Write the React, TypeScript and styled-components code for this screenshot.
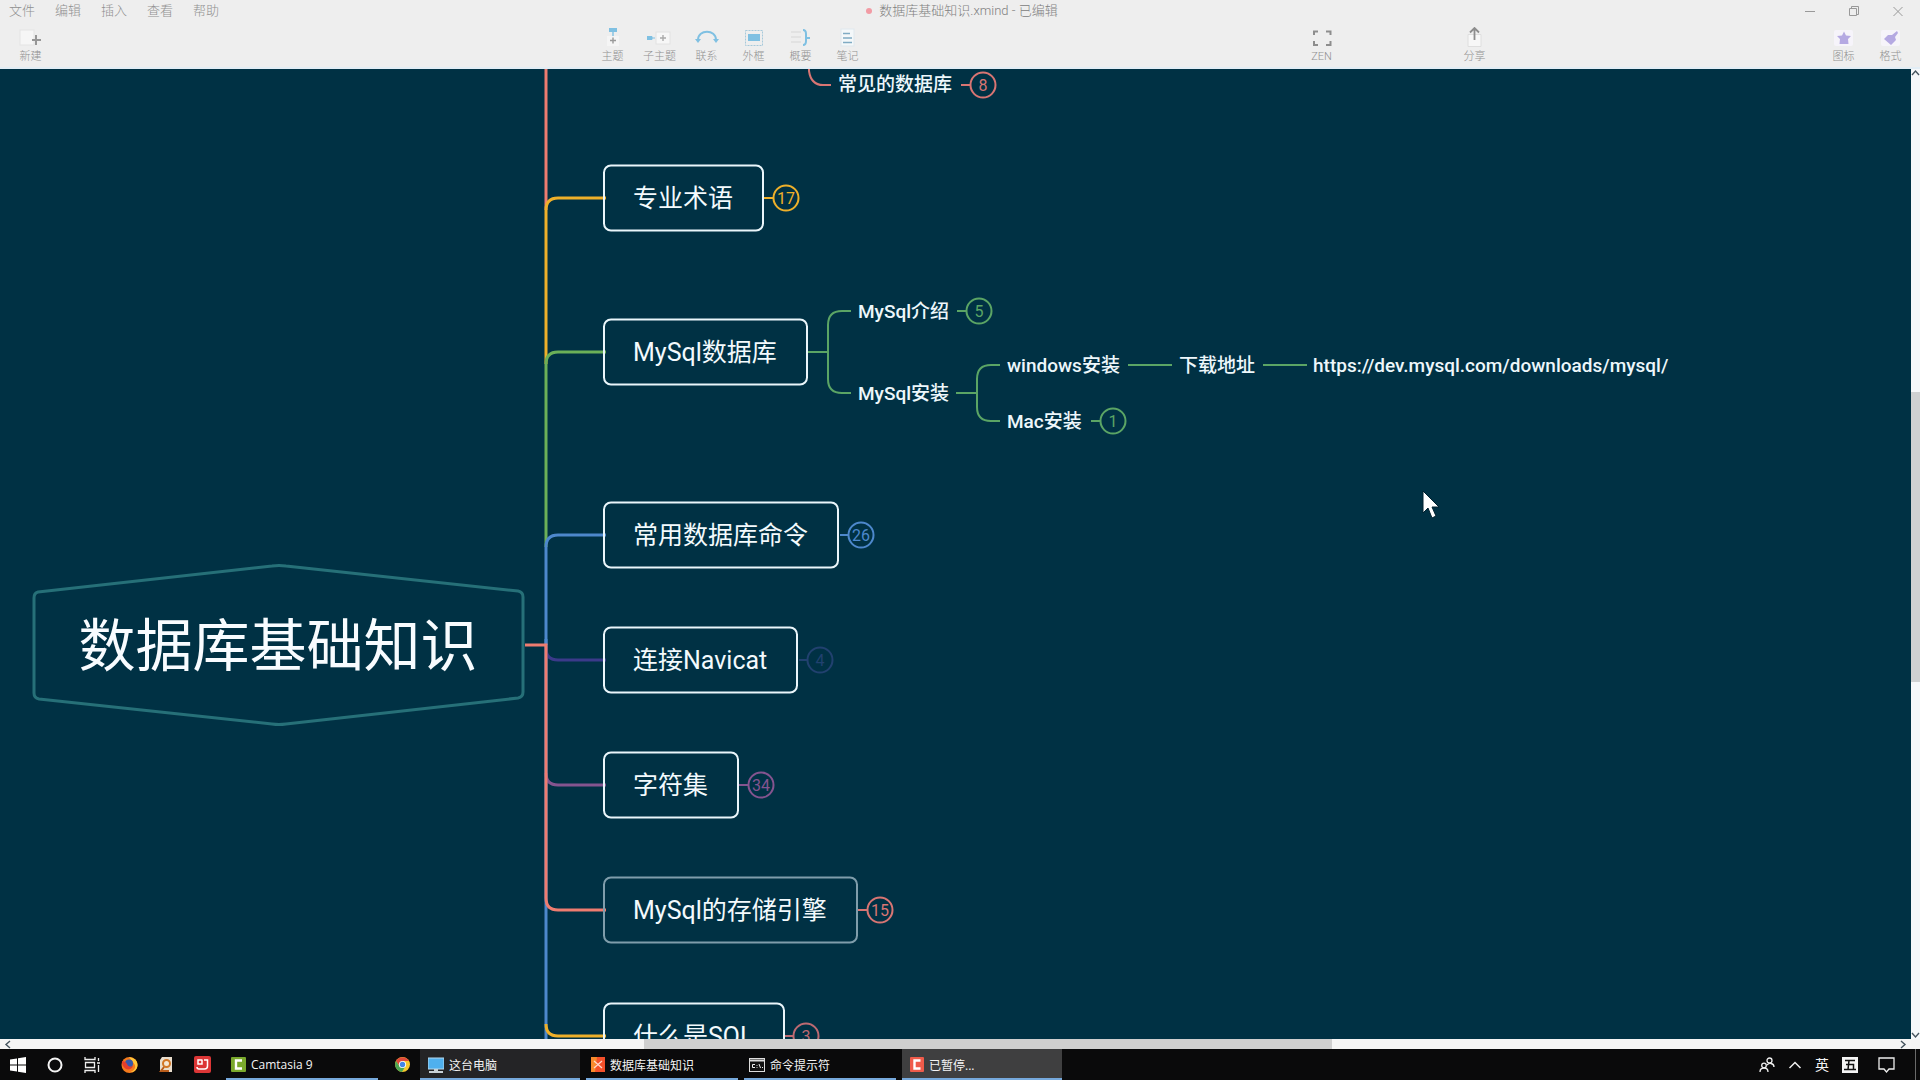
import React from "react";
import styled, { createGlobalStyle } from "styled-components";

const Global = createGlobalStyle`
  *, *::before, *::after { box-sizing: border-box; }
  body { margin: 0; background: #003144; font-family: Roboto, "Noto Sans CJK SC", sans-serif; }
  button, a { font: inherit; color: inherit; background: none; border: 0; padding: 0; margin: 0; text-decoration: none; }
`;

const Shell = styled.div`
  display: flex;
  flex-direction: column;
  height: 100vh;
  overflow: hidden;
`;

const Header = styled.header`
  flex: none;
  background: #eeeeee;
  border-bottom: 2px solid #e2edf5;
  color: #909090;
`;

const TitleRow = styled.div`
  display: grid;
  grid-template-columns: 1fr auto 1fr;
  align-items: center;
  height: 22px;
`;

const MenuBar = styled.nav`
  display: flex;
  gap: 20px;
  padding-left: 9px;
  font-size: 13px;
  line-height: 20px;
`;

const MenuButton = styled.button`
  font-weight: 300;
`;

const DocTitle = styled.h1`
  display: flex;
  align-items: center;
  gap: 7px;
  margin: 0;
  padding-left: 4px;
  font-size: 13px;
  font-weight: 300;
  line-height: 20px;
  color: #808080;
  &::before {
    content: "";
    width: 6px;
    height: 6px;
    border-radius: 50%;
    background: #f29ba4;
  }
`;

const WindowButtons = styled.div`
  display: flex;
  justify-content: flex-end;
  gap: 32px;
  padding-right: 16px;
`;

const WindowButton = styled.button`
  display: flex;
  width: 12px;
  height: 12px;
`;

const ToolRow = styled.div`
  display: grid;
  grid-template-columns: 582px 1fr auto;
  align-items: start;
  height: 45px;
  padding: 5px 6px 0 7px;
`;

const ToolGroup = styled.div`
  display: flex;
`;

const ViewTools = styled.div`
  display: flex;
  gap: 106px;
  margin-left: 427px;
`;

const Tool = styled.button`
  display: flex;
  flex-direction: column;
  align-items: center;
  gap: 1px;
  width: 47px;
  font-size: 11px;
  font-weight: 300;
  line-height: 16px;
  white-space: nowrap;
`;

const Workspace = styled.main`
  flex: 1;
  min-height: 0;
  display: grid;
  grid-template-columns: 1fr 9px;
  grid-template-rows: 1fr 10px;
  background: #f4f4f4;
`;

const Canvas = styled.section`
  position: relative;
  overflow: hidden;
  background: #003144;
`;

const Links = styled.svg`
  position: absolute;
  inset: 0;
  width: 100%;
  height: 100%;
  fill: none;
`;

const at = (p: { $x: number; $y: number }) => `left: ${p.$x}px; top: ${p.$y}px;`;

const Topic = styled.div<{ $x: number; $y: number; $dim?: boolean }>`
  position: absolute;
  ${at}
  transform: translateY(-50%);
  padding: 0 29px 0 28px;
  border: 2px solid ${(p) => (p.$dim ? "#7f9dab" : "#eaf6fb")};
  border-radius: 8px;
  color: #f3fafd;
  font-size: 25px;
  line-height: 63px;
  white-space: nowrap;
`;

const RootTopic = styled.div<{ $x: number; $y: number }>`
  position: absolute;
  ${at}
  transform: translate(-50%, -50%);
  color: #f8fcff;
  font-size: 57px;
  line-height: 80px;
  white-space: nowrap;
`;

const SubTopic = styled.div<{ $x: number; $y: number }>`
  position: absolute;
  ${at}
  transform: translateY(-50%);
  color: #edf7fb;
  font-size: 19px;
  font-weight: 500;
  line-height: 28px;
  white-space: nowrap;
`;

const Count = styled.button<{ $x: number; $y: number; $color: string }>`
  position: absolute;
  ${at}
  transform: translate(-50%, -50%);
  width: 27px;
  height: 27px;
  border: 2px solid ${(p) => p.$color};
  border-radius: 50%;
  color: ${(p) => p.$color};
  font-size: 16px;
  line-height: 23px;
  text-align: center;
`;

const Pointer = styled.svg`
  position: absolute;
  left: 1422px;
  top: 421px;
`;

const VBar = styled.div`
  display: flex;
  flex-direction: column;
  justify-content: space-between;
  align-items: center;
  position: relative;
  background: #f6f8fa;
`;

const VThumb = styled.div`
  position: absolute;
  inset: 33.3% 0 36.8% 0;
  background: #cfd1d2;
`;

const HBar = styled.div`
  display: flex;
  justify-content: space-between;
  align-items: center;
  position: relative;
  padding: 0 4px;
  background: #f5f5f5;
`;

const HThumb = styled.div`
  position: absolute;
  inset: 0 30.3% 0 33.7%;
  background: #cfcfcf;
`;

const Taskbar = styled.footer`
  flex: none;
  display: flex;
  align-items: stretch;
  height: 31px;
  background: #0a0a0b;
  color: #f4f4f4;
  font-family: "Open Sans", "Noto Sans CJK SC", sans-serif;
  font-size: 12px;
`;

const Launchers = styled.div`
  display: flex;
  align-items: center;
  justify-content: space-between;
  width: 226px;
  padding: 0 15px 0 10px;
`;

const PinnedApp = styled.button`
  display: flex;
  align-items: center;
  justify-content: center;
  width: 36px;
`;

const IconButton = styled.button`
  display: flex;
`;

const Task = styled.button<{ $active?: boolean; $bg?: string }>`
  display: flex;
  align-items: center;
  gap: 5px;
  width: ${(p) => (p.$bg ? 160 : 152)}px;
  margin-right: 6px;
  padding: 2px ${(p) => (p.$bg ? 8 : 5)}px 0;
  background: ${(p) => p.$bg || "transparent"};
  border-bottom: 2px solid #76a9dc;
  white-space: nowrap;
`;

const Tray = styled.div`
  display: flex;
  align-items: center;
  gap: 13px;
  margin-left: auto;
  padding-right: 4px;
`;

const TrayButton = styled.button<{ $apart?: boolean }>`
  display: flex;
  margin: 0 ${(p) => (p.$apart ? 7 : 0)}px;
  font-size: 14px;
  line-height: 20px;
`;

const ShowDesktop = styled.div`
  width: 1px;
  height: 31px;
  background: #6a6a6a;
`;

const C = {
  coral: "#ee7c70",
  yellow: "#eeb02a",
  green: "#6bb058",
  blue: "#4d88cc",
  indigo: "#3b3a8a",
  purple: "#84548f",
  navy: "#21416f",
  leaf: "#5ba565",
  rose: "#d87573",
};

const topics = [
  { text: "专业术语", y: 129, count: 17, cx: 786, color: C.yellow },
  { text: "MySql数据库", y: 283 },
  { text: "常用数据库命令", y: 466, count: 26, cx: 861, color: C.blue },
  { text: "连接Navicat", y: 591, count: 4, cx: 820, color: C.navy },
  { text: "字符集", y: 716, count: 34, cx: 761, color: C.purple },
  { text: "MySql的存储引擎", y: 841, count: 15, cx: 880, color: C.rose, dim: true },
  { text: "什么是SQL", y: 967, count: 3, cx: 806, color: "#bd6a72" },
];

const subs = [
  { text: "常见的数据库", x: 838, y: 16 },
  { text: "MySql介绍", x: 858, y: 243 },
  { text: "MySql安装", x: 858, y: 325 },
  { text: "windows安装", x: 1007, y: 297 },
  { text: "下载地址", x: 1179, y: 297 },
  { text: "Mac安装", x: 1007, y: 353 },
];

const links: [string, string, number][] = [
  ["M546 570V1000", C.blue, 3],
  ["M546 955Q546 967 558 967H606", C.yellow, 3],
  ["M546 579Q546 591 558 591H606", C.indigo, 3],
  ["M546 0V141", C.coral, 3],
  ["M546 295V141Q546 129 558 129H606", C.yellow, 3],
  ["M546 478V295Q546 283 558 283H606", C.green, 3],
  ["M546 576V478Q546 466 558 466H606", C.blue, 3],
  ["M546 704Q546 716 558 716H606", C.purple, 3],
  ["M525 576H546V829Q546 841 558 841H606", C.coral, 3],
  ["M809 0V2Q811 16 823 16H831", C.rose, 2],
  ["M961 16H970", C.rose, 2],
  ["M764 129H773", C.yellow, 2],
  ["M840 466H848", C.blue, 2],
  ["M799 591H807", C.navy, 2],
  ["M739 716H748", C.purple, 2],
  ["M858 841H867", C.rose, 2],
  ["M785 967H793", "#bd6a72", 2],
  ["M808 283H828M851 242H842Q828 242 828 256V310Q828 324 842 324H851", C.leaf, 2],
  ["M957 242H966", C.leaf, 2],
  ["M956 324H977M1000 296H991Q977 296 977 310V338Q977 352 991 352H1000", C.leaf, 2],
  ["M1128 296H1172M1263 296H1307M1091 352H1100", C.leaf, 2],
];

const Chevron = ({ d }: { d: string }) => (
  <svg width="9" height="9" viewBox="0 0 9 9" fill="none" stroke="#45545e" strokeWidth="1.4"><path d={d} /></svg>
);

const ToolIcon = ({ children }: { children: React.ReactNode }) => (
  <svg width="26" height="21" viewBox="0 0 26 21" fill="none" strokeWidth="1.4">{children}</svg>
);

const SKY = "#7fc0e2";
const insertTools = [
  { label: "主题", icon: <><rect x="9" y="1" width="8" height="4" fill={SKY} /><path d="M13 5v5" stroke={SKY} /><rect x="7" y="9" width="12" height="10" fill="#f5f5f5" /><path d="M13 10.500v6M10 13.500h6" stroke="#999" /></> },
  { label: "子主题", icon: <><path d="M0 9.500h5v3H0zM5 11h3" fill={SKY} stroke={SKY} strokeWidth="1" /><rect x="9" y="5" width="14" height="12" fill="#f7f7f7" stroke="#e2e2e2" strokeWidth="1" /><path d="M16 8v6M13 11h6" stroke="#aaa" /></> },
  { label: "联系", icon: <><path d="M4 13C4 2 22 2 22 13" stroke={SKY} strokeWidth="2" /><path d="M1 12l3 4 3-4zM19 12l3 4 3-4z" fill={SKY} /></> },
  { label: "外框", icon: <><rect x="4.500" y="3.500" width="17" height="15" stroke="#a6c9da" strokeDasharray="2 1" strokeWidth="1" /><rect x="7" y="7" width="12" height="7" fill={SKY} /></> },
  { label: "概要", icon: <><path d="M3 5h10M3 10h10M3 15h10" stroke="#dedede" /><path d="M15 3q3 0 3 4v7q0 4-3 4M18 11h4" stroke={SKY} strokeWidth="2" /></> },
  { label: "笔记", icon: <><rect x="6" y="2" width="13" height="17" fill="#f4f8fa" stroke="#e0e8ed" strokeWidth="1" /><path d="M8 6.500h7M8 11h9M8 15.500h9" stroke="#80abc4" strokeWidth="1.500" /></> },
];

export default function App() {
  return (
    <Shell>
      <Global />
      <Header>
        <TitleRow>
          <MenuBar>
            {["文件", "编辑", "插入", "查看", "帮助"].map((m) => <MenuButton key={m}>{m}</MenuButton>)}
          </MenuBar>
          <DocTitle>数据库基础知识.xmind - 已编辑</DocTitle>
          <WindowButtons>
            <WindowButton aria-label="最小化"><svg width="12" height="12" stroke="#999"><path d="M1 6.500h10" /></svg></WindowButton>
            <WindowButton aria-label="还原"><svg width="12" height="12" stroke="#999" fill="none"><path d="M1.500 3.500h7v7h-7zM3.500 3v-1.500h7v8H9" /></svg></WindowButton>
            <WindowButton aria-label="关闭"><svg width="12" height="12" stroke="#999"><path d="M1.500 2l9 9M10.500 2l-9 9" /></svg></WindowButton>
          </WindowButtons>
        </TitleRow>
        <ToolRow>
          <ToolGroup>
            <Tool>
              <ToolIcon><rect x="2" y="3" width="14" height="15" fill="#f6f6f6" stroke="#e4e4e4" strokeWidth="1" /><path d="M18 8v10M14 13h9" stroke="#969696" strokeWidth="2" /></ToolIcon>
              新建
            </Tool>
          </ToolGroup>
          <ToolGroup>
            {insertTools.map((t) => (
              <Tool key={t.label}><ToolIcon>{t.icon}</ToolIcon>{t.label}</Tool>
            ))}
            <ViewTools>
              <Tool>
                <ToolIcon><path d="M5 8V4.500H9M17 4.500h4.500V8M21.500 14v4H17M9 18H5V14" stroke="#8d8d8d" strokeWidth="2" /></ToolIcon>
                ZEN
              </Tool>
              <Tool>
                <ToolIcon><path d="M6 7.500h13v12H6z" fill="#f7f7f7" stroke="#dedede" strokeWidth="1" /><path d="M12.500 13V1M8 5.500L12.500 1 17 5.500" stroke="#8d8d8d" strokeWidth="1.800" /></ToolIcon>
                分享
              </Tool>
            </ViewTools>
          </ToolGroup>
          <ToolGroup>
            <Tool>
              <ToolIcon><rect x="3" y="3" width="19" height="16" rx="2" fill="#f6f4fa" /><path d="M13 4.500l2 4 5 .600-3 3 .500 5H8.500l.500-5-3-3 5-.600z" fill="#b5a9e2" /></ToolIcon>
              图标
            </Tool>
            <Tool>
              <ToolIcon><rect x="3" y="3" width="19" height="16" rx="2" fill="#f6f4fa" /><path d="M19 4l1 2-3 4 1 3-5 5-7-6 4-4 4 0z" fill="#b5a9e2" /></ToolIcon>
              格式
            </Tool>
          </ToolGroup>
        </ToolRow>
      </Header>

      <Workspace>
        <Canvas>
          <Links aria-hidden="true">
            {links.map(([d, color, w]) => <path key={d} d={d} stroke={color} strokeWidth={w} />)}
            <path
              d="M38 523L272 497Q279 496 286 497L518 522Q523 523 523 528V623Q523 628 518 629L286 655Q279 656 272 655L39 630Q34 629 34 624V529Q34 524 38 523Z"
              stroke="#267078"
              strokeWidth="3"
            />
          </Links>
          <RootTopic $x={278} $y={578}>数据库基础知识</RootTopic>
          {topics.map((t) => <Topic key={t.text} $x={603} $y={t.y} $dim={t.dim}>{t.text}</Topic>)}
          {topics.map((t) => t.count && (
            <Count key={t.count} $x={t.cx!} $y={t.y} $color={t.color!}>{t.count}</Count>
          ))}
          {subs.map((s) => <SubTopic key={s.text} $x={s.x} $y={s.y}>{s.text}</SubTopic>)}
          <SubTopic as="a" href="https://dev.mysql.com/downloads/mysql/" $x={1313} $y={297}>https://dev.mysql.com/downloads/mysql/</SubTopic>
          <Count $x={983} $y={16} $color={C.rose}>8</Count>
          <Count $x={979} $y={242} $color={C.leaf}>5</Count>
          <Count $x={1113} $y={352} $color={C.leaf}>1</Count>
          <Pointer width="18" height="30" viewBox="0 0 18 30" aria-hidden="true">
            <path d="M1 1v22l5-5 4 10 4-2-4-9h7z" fill="#fff" stroke="#00202e" strokeWidth="1" />
          </Pointer>
        </Canvas>
        <VBar><Chevron d="M1 6l3.500-4 3.500 4" /><VThumb /><Chevron d="M1 3l3.500 4 3.500-4" /></VBar>
        <HBar><Chevron d="M6 1l-4 3.500 4 3.500" /><HThumb /><Chevron d="M3 1l4 3.500-4 3.500" /></HBar>
      </Workspace>

      <Taskbar>
        <Launchers>
          <IconButton aria-label="开始"><svg width="16" height="16" fill="#fff"><path d="M0 2.500l7-1v6H0zM8 1.300L16 0v7.500H8zM0 8.500h7v6l-7-1zM8 8.500h8V16l-8-1.300z" /></svg></IconButton>
          <IconButton aria-label="搜索"><svg width="16" height="16" fill="none" stroke="#f4f4f4" strokeWidth="2"><circle cx="8" cy="8" r="6.500" /></svg></IconButton>
          <IconButton aria-label="任务视图"><svg width="16" height="16" fill="none" stroke="#eee" strokeWidth="1.300"><path d="M1 0v2.500h10V0M1 16v-2.500h10V16M1.500 5.500h9v5h-9zM14.500 1v3M14.500 8v7M13 6h3" /></svg></IconButton>
          <IconButton aria-label="Firefox">
            <svg width="17" height="17"><circle cx="8.500" cy="9" r="8" fill="#f47a1c" /><path d="M8 1c6 1 9 4 8.500 9-1 4-3 6-7 6 5-2 6-6 3-9C11 4 9 3 8 1z" fill="#ffc83a" /><circle cx="8" cy="7.500" r="4" fill="#3659ab" /><path d="M1 5c2 0 4 1 5 3 1 3 4 3 6 2-1 3-4 4-7 3-3-2-4-4-4-8z" fill="#e43d2c" /></svg>
          </IconButton>
          <IconButton aria-label="文档搜索">
            <svg width="14" height="16"><path d="M3 0h10v15H1V3z" fill="#e9ddcd" /><circle cx="7.500" cy="6.500" r="3.500" fill="#f4e7d5" stroke="#d27624" strokeWidth="2" /><path d="M5 10l-3 4h8" stroke="#b95d1b" strokeWidth="2" fill="none" /></svg>
          </IconButton>
          <IconButton aria-label="录屏">
            <svg width="17" height="17" fill="none" stroke="#fff" strokeWidth="1.500"><rect width="17" height="17" rx="2" fill="#dc3636" stroke="none" /><path d="M8 4H4v4h4V3.500v5M10 4h3.500v6q0 3-3 3H5q-2 0-2-2" /></svg>
          </IconButton>
        </Launchers>
        <Task>
          <svg width="15" height="15"><rect width="15" height="15" rx="1" fill="#7aa82c" /><path d="M11 3.500H5v8h6" fill="none" stroke="#fff" strokeWidth="2.400" /></svg>
          Camtasia 9
        </Task>
        <PinnedApp aria-label="Chrome">
          <svg width="15" height="15"><circle cx="7.500" cy="7.500" r="7.500" fill="#f6c72e" /><path d="M1 4a7.500 7.500 0 0 1 13 0H7.500L4.500 9z" fill="#df493b" /><path d="M1 4a7.500 7.500 0 0 0 6 11l3-5H5z" fill="#4aa654" /><circle cx="7.500" cy="7.500" r="3.600" fill="#fff" /><circle cx="7.500" cy="7.500" r="2.700" fill="#4285e8" /></svg>
        </PinnedApp>
        <Task $bg="#242426">
          <svg width="16" height="16"><rect y="1" width="16" height="11" fill="#4fb0ee" stroke="#b5d9ef" /><path d="M6 12h4v2H6zM1 14h14v2H1z" fill="#c8d1d7" /></svg>
          这台电脑
        </Task>
        <Task>
          <svg width="14" height="15"><rect width="14" height="15" fill="#f4502a" /><path d="M0 0h6L4 15H0z" fill="#f88a2c" /><path d="M3 4l8 7M11 4l-8 7" stroke="#ffd9ca" strokeWidth="1.300" /></svg>
          数据库基础知识
        </Task>
        <Task>
          <svg width="16" height="14"><rect x=".500" y=".500" width="15" height="13" fill="#111" stroke="#ddd" /><path d="M1 2.500h14" stroke="#ddd" strokeWidth="2" /><path d="M6 6.500H3.500v3H6M8 7v.800M8 9v.800M10 6l1.500 4M13 9.500h1" stroke="#eee" fill="none" /></svg>
          命令提示符
        </Task>
        <Task $bg="#3f3f40">
          <svg width="14" height="15"><rect width="14" height="15" rx="1" fill="#ef5b4a" /><path d="M10.500 3.500H4.500v8h6" fill="none" stroke="#fff" strokeWidth="2.400" /></svg>
          已暂停...
        </Task>
        <Tray>
          <TrayButton aria-label="人脉"><svg width="16" height="16" fill="none" stroke="#eee" strokeWidth="1.300"><circle cx="10.500" cy="3.500" r="2.500" /><circle cx="5" cy="8.500" r="2.300" /><path d="M1 15q0-4 4-4t4 4M8 8q2-2 4-1.500Q15 7 15 10" /></svg></TrayButton>
          <TrayButton aria-label="显示隐藏的图标"><svg width="14" height="16" fill="none" stroke="#eee" strokeWidth="1.500"><path d="M1.500 11L7 5.500l5.500 5.500" /></svg></TrayButton>
          <TrayButton>英</TrayButton>
          <TrayButton aria-label="五笔输入法"><svg width="16" height="16"><rect width="16" height="16" fill="#f4f4f4" /><path d="M3 3.500h10M4 7.500h7.500v5M7 3.500l-1 9M2 12.500h12" stroke="#111" strokeWidth="1.500" fill="none" /></svg></TrayButton>
          <TrayButton $apart aria-label="通知"><svg width="17" height="16" fill="none" stroke="#eee" strokeWidth="1.300"><path d="M1 1h15v11h-5l-2.500 3L6 12H1z" /></svg></TrayButton>
          <ShowDesktop />
        </Tray>
      </Taskbar>
    </Shell>
  );
}
